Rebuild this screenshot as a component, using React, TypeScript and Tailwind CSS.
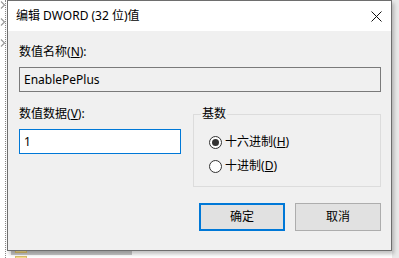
import React from "react";

const font = { fontFamily: '"Noto Sans", "Noto Sans CJK SC", sans-serif' };

export default function App() {
  return (
    <div className="relative w-[399px] h-[258px] overflow-hidden bg-white text-[12px] leading-[16px] text-black" style={font}>
      <Backdrop />
      <div className="absolute left-[7px] top-0 w-[385px] h-[251px] flex flex-col border border-[#6e6e6e] bg-[#f0f0f0] shadow-[2px_3px_4px_rgba(0,0,0,0.25)]">
        <div className="h-[30px] shrink-0 bg-white flex items-center justify-between pl-[8px] pr-[9px]">
          <span>编辑 DWORD (32 位)值</span>
          <svg width="11" height="11" viewBox="0 0 11 11" className="mt-[1px]">
            <path d="M0.5 0.5 L10.5 10.5 M10.5 0.5 L0.5 10.5" stroke="#111" strokeWidth="1" />
          </svg>
        </div>

        <div className="flex flex-col pl-[11px] pr-[10px] pt-[13px]">
          <Label text="数值名称" k="N" />
          <div className="mt-[7px] h-[25px] border border-[#7a7a7a] bg-[#f0f0f0] flex items-center px-[4px]">
            EnablePePlus
          </div>

          <div className="mt-[14px] flex gap-[12px]">
            <div className="w-[162px] flex flex-col">
              <Label text="数值数据" k="V" />
              <div className="mt-[7px] h-[25px] border border-[#0078d7] bg-white flex items-center px-[4px]">1</div>
            </div>
            <fieldset className="flex-1 h-[81px] border border-[#dcdcdc]">
              <legend className="ml-[7px] px-[1px]">基数</legend>
              <div className="pl-[15px] pt-[12px]">
                <Radio checked text="十六进制" k="H" />
                <div className="mt-[8px]">
                  <Radio text="十进制" k="D" />
                </div>
              </div>
            </fieldset>
          </div>

          <div className="mt-[16px] flex justify-end gap-[10px]">
            <button className="w-[86px] h-[28px] bg-[#e1e1e1] border-2 border-[#0078d7]">确定</button>
            <button className="w-[86px] h-[28px] bg-[#e1e1e1] border border-[#adadad]">取消</button>
          </div>
        </div>
      </div>
    </div>
  );
}

function Label({ text, k }: { text: string; k: string }) {
  return (
    <div>
      {text}(<u className="underline-offset-1">{k}</u>):
    </div>
  );
}

function Radio({ text, k, checked }: { text: string; k: string; checked?: boolean }) {
  return (
    <div className="flex items-center gap-[3px] h-[16px]">
      <span className="w-[13px] h-[13px] rounded-full border border-[#333] bg-white flex items-center justify-center">
        {checked && <span className="w-[7px] h-[7px] rounded-full bg-[#333]" />}
      </span>
      <span>
        {text}(<u className="underline-offset-1">{k}</u>)
      </span>
    </div>
  );
}

function Chevron({ top }: { top: number }) {
  return (
    <svg width="6" height="8" viewBox="0 0 6 8" className="absolute left-[0px]" style={{ top }}>
      <path d="M1 0.5 L4.5 4 L1 7.5" stroke="#9a9a9a" strokeWidth="1.2" fill="none" />
    </svg>
  );
}

function Backdrop() {
  return (
    <>
      <div className="absolute left-[5px] top-0 h-full border-l border-dotted border-[#8a8a8a]" />
      <Chevron top={1} />
      <Chevron top={18} />
      <Chevron top={39} />
      <div className="absolute left-[392px] top-0 w-[7px] h-full bg-[#eaeaea]" />
      <div className="absolute left-[11px] top-[251px] w-[121px] h-[4px] bg-[#c9c9c9]" />
      <div className="absolute left-[15px] top-[250px] w-[12px] h-[3px] border border-[#dcc06a] bg-[#f3dc8e]" />
      <div className="absolute left-[15px] top-[256px] w-[12px] h-[4px] border border-[#dcc06a] bg-[#f3dc8e]" />
    </>
  );
}
